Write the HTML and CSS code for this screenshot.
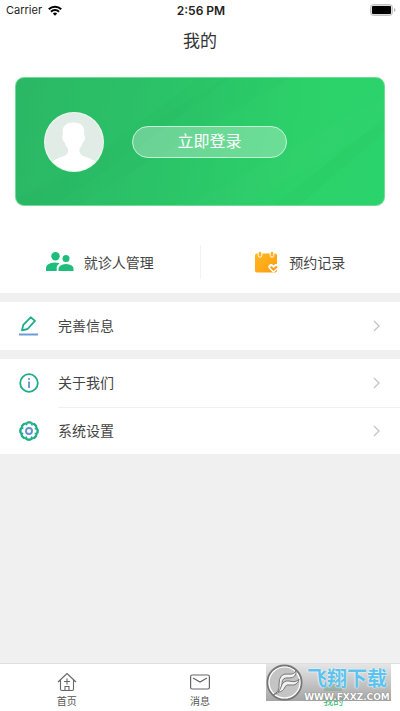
FILE: index.html
```html
<!DOCTYPE html>
<html lang="zh-CN">
<head>
<meta charset="utf-8">
<meta name="viewport" content="width=device-width, initial-scale=1">
<title>我的</title>
<link rel="stylesheet" href="styles.css">
</head>
<body>
<div class="app">
  <div class="status">
    <div class="carrier"><span>Carrier</span>
      <svg width="14" height="11" viewBox="0 0 14 11"><g fill="none" stroke="#000" stroke-width="2"><path d="M.8 4.3a8.8 8.8 0 0 1 12.4 0"/><path d="M3 6.700a5.700 5.700 0 0 1 8 0"/></g><path d="M7 10.800 4.800 8.500a3.100 3.100 0 0 1 4.400 0z"/></svg>
    </div>
    <span class="time">2:56 PM</span>
    <div class="battery">
      <svg width="26" height="12" viewBox="0 0 26 12"><rect x=".5" y=".5" width="22" height="11" rx="3" fill="#ddd" stroke="#c2c2c2"/><rect x="2" y="2" width="19" height="8" rx="1"/><path d="M24 4q1.500.5 1.500 2T24 8z" fill="#b5b5b5"/></svg>
    </div>
  </div>
  <header class="title"><h1>我的</h1></header>
  <main>
    <div class="hero">
      <section class="card">
        <svg class="rays" viewBox="0 0 370 128" preserveAspectRatio="none">
          <path d="M0 128 210 0H275L60 128z" fill="#087a3f" opacity=".015"/>
          <path d="M40 128 120 72 215 0H185L90 70 0 122V128z" fill="#087a3f" opacity=".02"/>
          <path d="M175 128 370 18V45L230 128z" fill="#fff" opacity=".015"/>
          <path d="M285 128 370 55V40L260 128z" fill="#087a3f" opacity=".02"/>
        </svg>
        <svg class="avatar" width="60" height="60" viewBox="0 0 60 60">
          <defs><clipPath id="face"><circle cx="30" cy="30" r="29"/></clipPath></defs>
          <circle cx="30" cy="30" r="30" fill="#f1f8f3"/><circle cx="30" cy="30" r="29" fill="#e1ece6"/>
          <path clip-path="url(#face)" fill="#fff" d="M19 23C17.500 14 22 10.500 29.500 10.500S41.500 14 40 23q1.500.5 1 3.500-.5 3-2 3.500-.8 4-3.500 6.500V40q1 3 5 4.500 8 2.500 13 6.500v10H6V51q5-4 13-6.500 4-1.500 5-4.500v-3.500q-2.700-2.500-3.500-6.500-1.500-.5-2-3.500-.5-3 .5-3.500z"/>
        </svg>
        <button class="login" type="button">立即登录</button>
      </section>
    </div>
    <nav class="quick">
      <a href="#patients">
        <svg width="28" height="20" viewBox="0 0 28 20"><g fill="#1fbd7c"><circle cx="9.500" cy="4.200" r="4.200"/><circle cx="20" cy="6.500" r="3.500"/><path d="M0 19v-3q0-5 9-5.500 2.500 0 4.500.7-2.800 2-2.800 5V19zM12.500 19v-2.500q.5-4 7.500-4.500 7.500.5 7.500 4.500V19z"/></g></svg>
        <span>就诊人管理</span>
      </a>
      <a href="#records">
        <svg width="24" height="22" viewBox="0 0 24 22"><defs><linearGradient id="sun" x2="1" y2="1"><stop stop-color="#ffb91e"/><stop offset="1" stop-color="#ff9c12"/></linearGradient></defs><rect y="2.500" width="22" height="19" rx="2" fill="url(#sun)"/><g fill="#ffb321" stroke="#fff"><rect x="3.200" y=".2" width="3.600" height="6" rx="1.800"/><rect x="15.200" y=".2" width="3.600" height="6" rx="1.800"/></g><path d="M18.500 22 13.900 17.500q-1.700-3 1-4.300 2-.6 3.600 1.300 1.600-1.900 3.600-1.300 2.700 1.300 1 4.300z" fill="#fff"/><path d="m15.700 15.800 2.900 2.700 3.300-3" fill="none" stroke="#ff9e16" stroke-width="2.200"/></svg>
        <span>预约记录</span>
      </a>
    </nav>
    <div class="group">
      <a class="row" href="#profile">
        <svg width="20" height="20" viewBox="0 0 20 20"><path d="M3 14.300 4.300 8.900 11.700 1.300 16 4.900 8.600 13z" fill="none" stroke="#1fad87" stroke-width="1.800" stroke-linejoin="round"/><path d="M0 18.500h19" stroke="#6c9ad9" stroke-width="2"/></svg>
        <span>完善信息</span>
        <svg class="go" width="8" height="12" viewBox="0 0 8 12"><path d="m1 1 5 5-5 5"/></svg>
      </a>
    </div>
    <div class="group">
      <a class="row" href="#about">
        <svg width="20" height="20" viewBox="0 0 20 20"><circle cx="10" cy="10" r="8.800" fill="none" stroke="#1fad87" stroke-width="1.800"/><path d="M10 8.500V15" stroke="#668fd6" stroke-width="1.800"/><circle cx="10" cy="6" r="1.100" fill="#668fd6"/></svg>
        <span>关于我们</span>
        <svg class="go" width="8" height="12" viewBox="0 0 8 12"><path d="m1 1 5 5-5 5"/></svg>
      </a>
      <a class="row" href="#settings">
        <svg width="20" height="20" viewBox="0 0 20 20"><circle cx="10" cy="10" r="8.400" fill="none" stroke="#1fad87" stroke-width="1.800"/><circle cx="10" cy="10" r="9" fill="none" stroke="#1fad87" stroke-width="1.600" stroke-dasharray="4.500 2.569" stroke-dashoffset="2.250"/><circle cx="10" cy="10" r="6.900" fill="none" stroke="#1fad87" stroke-width="1.500" stroke-dasharray="1.800 3.619" stroke-dashoffset="3.610"/><circle cx="10" cy="10" r="3" fill="none" stroke="#668fd6" stroke-width="1.900"/></svg>
        <span>系统设置</span>
        <svg class="go" width="8" height="12" viewBox="0 0 8 12"><path d="m1 1 5 5-5 5"/></svg>
      </a>
    </div>
  </main>
  <nav class="tabs">
    <a href="#home">
      <svg width="20" height="20" viewBox="0 0 20 20"><path d="M1 10 10 1.500 19 10M3.500 8v9q0 1.500 1.500 1.500h10q1.500 0 1.500-1.500V8M10 6.500v6M7 9.500h6M8 18v-3.500h4V18" fill="none" stroke="#666" stroke-width="1.100"/></svg>
      <span>首页</span>
    </a>
    <a href="#messages">
      <svg width="20" height="20" viewBox="0 0 20 20"><rect x=".6" y="3" width="18.800" height="14" rx="1.500" fill="none" stroke="#666" stroke-width="1.200"/><path d="m3 6 7 4 7-4" fill="none" stroke="#666" stroke-width="1.200"/></svg>
      <span>消息</span>
    </a>
    <a class="current" href="#mine">
      <svg width="20" height="20" viewBox="0 0 20 20"><circle cx="10" cy="6" r="4" fill="#25b865"/><path d="M1 19v-3q3-4 9-4t9 4v3z" fill="#25b865"/></svg>
      <span>我的</span>
    </a>
    <div class="mark">
      <svg width="37" height="37" viewBox="0 0 37 37"><circle cx="18.500" cy="18.500" r="17" fill="#d2d2d2" stroke="#777" stroke-width="2"/><circle cx="18.500" cy="18.500" r="15.500" fill="#c4c4c4" stroke="#fff" stroke-width="1.200"/><g fill="#f2f2f2" stroke="#777" stroke-width="1"><path d="M7 31Q14 28 13 20 13 9 22 10q7 1 8-4 1 8-7 8-7-1-7 5 1 9-9 12z"/><path d="M15 23q2-7 8-6 7 2 10-2-1 7-9 6-4-1-5 2-2 5-7 5 2-2 3-5z"/></g></svg>
      <div class="words"><strong>飞翔下载</strong><small>WWW.FXXZ.COM</small></div>
    </div>
  </nav>
</div>
</body>
</html>
```
FILE: styles.css
```css
* { box-sizing: border-box; }
body {
  margin: 0;
  background: #f0f0f0;
  color: #444;
  font-family: "Liberation Sans", "Noto Sans CJK SC", sans-serif;
}
a { color: inherit; text-decoration: none; }
svg { display: block; flex: none; }
.app { display: flex; flex-direction: column; min-height: 100vh; }
main { flex: 1; }

.status {
  display: grid;
  grid-template-columns: 1fr auto 1fr;
  align-items: center;
  height: 20px;
  padding: 0 4px 0 6px;
  background: #fff;
  color: #222;
  font-family: Inter, sans-serif;
  font-size: 11px;
}
.carrier { display: flex; align-items: center; gap: 6px; }
.time { font-weight: 600; font-size: 12px; }
.battery { justify-self: end; }

.title { background: #fff; }
.title h1 {
  margin: 0;
  color: #333;
  font-size: 17px;
  font-weight: 400;
  line-height: 44px;
  text-align: center;
}

.hero { padding: 13px 15px 0; background: #fff; }
.card {
  position: relative;
  display: flex;
  align-items: center;
  gap: 28px;
  height: 129px;
  padding: 0 28px;
  border: 1px solid #6edb98;
  border-radius: 9px;
  overflow: hidden;
  background: linear-gradient(100deg, #2bb765, #2bc368 40%, #2cd169 75%, #2bd36c);
}
.rays { position: absolute; inset: 0; width: 100%; height: 100%; }
.avatar { position: relative; }
.login {
  position: relative;
  width: 42%;
  min-width: 155px;
  height: 32px;
  padding: 0;
  border: 1px solid #c8f2d6;
  border-radius: 16px;
  background: rgba(255, 255, 255, .3);
  color: #fff;
  font: 400 16px/28px "Liberation Sans", "Noto Sans CJK SC", sans-serif;
}

.quick { display: flex; padding: 39px 0 14px; background: #fff; }
.quick a {
  flex: 1;
  display: flex;
  align-items: center;
  justify-content: center;
  gap: 10px;
  height: 34px;
  font-size: 14px;
}
.quick a + a { border-left: 1px solid #f3f3f3; }

.group { margin-top: 9px; background: #fff; }
.row {
  position: relative;
  display: flex;
  align-items: center;
  gap: 19px;
  height: 48px;
  padding: 0 19px;
  font-size: 14px;
  line-height: 20px;
}
.row + .row { height: 47px; }
.row + .row::before {
  content: "";
  position: absolute;
  top: 0;
  left: 58px;
  right: 0;
  border-top: 1px solid #f0f0f0;
}
.go { margin-left: auto; fill: none; stroke: #c4c4c4; stroke-width: 1.3; }

.tabs {
  position: relative;
  display: flex;
  height: 48px;
  border-top: 1px solid #dedede;
  background: #fff;
}
.tabs a {
  flex: 1;
  display: flex;
  flex-direction: column;
  align-items: center;
  gap: 2px;
  padding-top: 8px;
  color: #555;
  font-size: 10px;
  line-height: 16px;
}
.tabs .current { color: #25b865; }
.mark {
  position: absolute;
  top: 0;
  right: 9px;
  display: flex;
  align-items: center;
  width: 125px;
  height: 37px;
  background: linear-gradient(rgba(225, 225, 225, .85), rgba(150, 150, 150, .85));
}
.words {
  display: flex;
  flex-direction: column;
  align-items: center;
  flex: 1;
  padding-top: 2px;
}
.words strong {
  color: #5cc3ee;
  font-size: 20px;
  line-height: 26px;
  text-shadow: 0 0 1px #fff, 0 0 2px #fff;
}
.words small {
  color: #fff;
  font: 700 9px/10px "DejaVu Sans", sans-serif;
  text-shadow: 0 0 1px #555;
}
```
